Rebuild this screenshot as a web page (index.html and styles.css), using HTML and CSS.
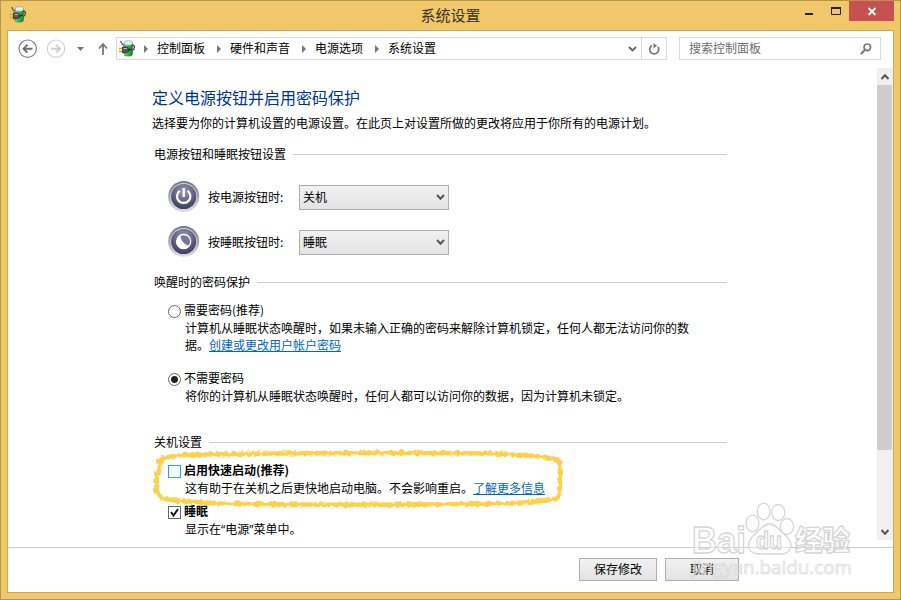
FILE: index.html
```html
<!DOCTYPE html>
<html lang="zh-CN">
<head>
    <meta charset="UTF-8">
    <meta name="viewport" content="width=device-width, initial-scale=1.0">
    <title>系统设置</title>
    <link rel="stylesheet" href="styles.css">
</head>
<body>
    <svg class="defs" width="0" height="0">
        <defs>
            <linearGradient id="cell" x1="0" x2="1" y1="0" y2="0">
                <stop offset="0" stop-color="#8fe08c"/>
                <stop offset="0.35" stop-color="#3fc254"/>
                <stop offset="1" stop-color="#13852b"/>
            </linearGradient>
            <linearGradient id="ring" x1="0" x2="0" y1="0" y2="1">
                <stop offset="0" stop-color="#77777a"/>
                <stop offset="0.5" stop-color="#a3a3a8"/>
                <stop offset="1" stop-color="#e2e2e6"/>
            </linearGradient>
            <radialGradient id="orb" cx="0.5" cy="0.3" r="0.75">
                <stop offset="0" stop-color="#9c9cb8"/>
                <stop offset="0.5" stop-color="#66668a"/>
                <stop offset="1" stop-color="#343458"/>
            </radialGradient>
        </defs>
        <symbol id="power-icon" viewBox="0 0 17 17">
            <path d="M1.500 1l2 3.500 2 1" fill="none" stroke="#555" stroke-width="1.200"/>
            <path d="M13 5c3.500 0 3 4.500-.5 6" fill="none" stroke="#444" stroke-width="1.300"/>
            <rect x="5" y="2" width="8.500" height="14" rx="2.500" fill="url(#cell)" stroke="#2c7038" stroke-width=".6"/>
            <ellipse cx="9.300" cy="3" rx="4.200" ry="2.300" fill="#e9ecf8" stroke="#8790a5" stroke-width=".6"/>
            <path d="M0 8.500h4M0 11.500h4" stroke="#d9a514" stroke-width="1.300"/>
            <path d="M3.500 7h4l2.300 1.500v2.700L7.500 12.700h-4z" fill="#55555a" stroke="#222225" stroke-width=".7"/>
            <path d="M4.500 8.500h3.500" stroke="#bbb" stroke-width="1"/>
            <path d="M9.500 10l3.300-.8" stroke="#222" stroke-width="1.200"/>
        </symbol>
    </svg>

    <div class="window">
        <div class="titlebar">
            <svg class="app-icon" width="17" height="17"><use href="#power-icon"/></svg>
            <div class="window-title">系统设置</div>
            <div class="window-controls">
                <svg class="control" width="30" height="20"><path d="M6 12h8v2H6z" fill="#222"/></svg>
                <svg class="control" width="20" height="20"><path d="M2.500 7v6.500h9V7z" fill="none" stroke="#222"/><path d="M2 6h10v2H2z" fill="#222"/></svg>
                <svg class="close" width="45" height="20"><path d="M19.500 7l7 7M26.500 7l-7 7" stroke="#fff" stroke-width="1.800"/></svg>
            </div>
        </div>

        <div class="client">
            <div class="navbar">
                <div class="nav-buttons">
                    <svg width="20" height="20"><circle cx="9.700" cy="9.700" r="8.700" fill="none" stroke="#808080" stroke-width="1.200"/><path d="M14.500 9.700H6M9.500 5.700l-4 4 4 4" fill="none" stroke="#707070" stroke-width="1.900"/></svg>
                    <svg width="20" height="20"><circle cx="10" cy="9.700" r="8.700" fill="none" stroke="#d2d2d2" stroke-width="1.200"/><path d="M5 9.700h8.500M10 5.700l4 4-4 4" fill="none" stroke="#cecece" stroke-width="1.900"/></svg>
                    <svg width="9" height="20"><path d="M1 8h7L4.500 12z" fill="#777"/></svg>
                    <svg width="10" height="20"><path d="M5 16V5.500M1 9.500l4-4.500 4 4.500" fill="none" stroke="#777" stroke-width="1.800"/></svg>
                </div>
                <div class="address">
                    <svg width="17" height="17"><use href="#power-icon"/></svg>
                    <div class="crumb"><span>控制面板</span></div>
                    <div class="crumb"><span>硬件和声音</span></div>
                    <div class="crumb"><span>电源选项</span></div>
                    <div class="crumb"><span>系统设置</span></div>
                    <svg class="history" width="9" height="8"><path d="M1 2l3.500 3.500L8 2" fill="none" stroke="#666" stroke-width="1.800"/></svg>
                    <div class="refresh">
                        <svg width="12" height="12"><path d="M4 2.500A4.500 4.500 0 1 0 10 4" fill="none" stroke="#777" stroke-width="1.700"/><path d="M5.500 0v5.500L9 2.700z" fill="#777"/></svg>
                    </div>
                </div>
                <div class="search">
                    <span>搜索控制面板</span>
                    <svg width="12" height="12"><circle cx="7.300" cy="4.300" r="3.300" fill="none" stroke="#777" stroke-width="1.700"/><path d="M5 6.800L.8 11" stroke="#777" stroke-width="2"/></svg>
                </div>
            </div>

            <div class="body">
                <div class="content">
                    <h1>定义电源按钮并启用密码保护</h1>
                    <p class="intro">选择要为你的计算机设置的电源设置。在此页上对设置所做的更改将应用于你所有的电源计划。</p>

                    <div class="section-title">电源按钮和睡眠按钮设置</div>
                    <div class="button-row first">
                        <svg width="32" height="32">
                            <circle cx="15.700" cy="15.500" r="15.500" fill="url(#ring)"/>
                            <circle cx="15.700" cy="15.500" r="13.400" fill="#d7d7df"/>
                            <circle cx="15.700" cy="15.500" r="12.600" fill="url(#orb)"/>
                            <path d="M11.800 9.800a6.700 6.700 0 1 0 7.800 0" fill="none" stroke="#fff" stroke-width="2.200"/>
                            <path d="M15.700 7v9" stroke="#fff" stroke-width="2.400"/>
                        </svg>
                        <span class="button-label">按电源按钮时:</span>
                        <div class="select"><span>关机</span><svg width="9" height="8"><path d="M1 2l3.500 3.700L8 2" fill="none" stroke="#555" stroke-width="2"/></svg></div>
                    </div>
                    <div class="button-row">
                        <svg width="32" height="32">
                            <circle cx="15.700" cy="15.500" r="15.500" fill="url(#ring)"/>
                            <circle cx="15.700" cy="15.500" r="13.400" fill="#d7d7df"/>
                            <circle cx="15.700" cy="15.500" r="12.600" fill="url(#orb)"/>
                            <circle cx="15.700" cy="15.500" r="7" fill="#77779a" stroke="#fff" stroke-width="1.300"/>
                            <path d="M12.500 9.200a7.200 7.200 0 1 0 9 10.500C16.500 19 12.500 14.500 12.500 9.200z" fill="#fff"/>
                        </svg>
                        <span class="button-label">按睡眠按钮时:</span>
                        <div class="select"><span>睡眠</span><svg width="9" height="8"><path d="M1 2l3.500 3.700L8 2" fill="none" stroke="#555" stroke-width="2"/></svg></div>
                    </div>

                    <div class="section-title wake">唤醒时的密码保护</div>
                    <div class="option password-on">
                        <span class="radio"></span>需要密码(推荐)
                    </div>
                    <p class="description">计算机从睡眠状态唤醒时，如果未输入正确的密码来解除计算机锁定，任何人都无法访问你的数据。<a href="#">创建或更改用户帐户密码</a></p>
                    <div class="option password-off">
                        <span class="radio checked"></span>不需要密码
                    </div>
                    <p class="description">将你的计算机从睡眠状态唤醒时，任何人都可以访问你的数据，因为计算机未锁定。</p>

                    <div class="section-title shutdown">关机设置</div>
                    <div class="option bold fast-startup">
                        <span class="checkbox hot"></span>启用快速启动(推荐)
                    </div>
                    <p class="description">这有助于在关机之后更快地启动电脑。不会影响重启。<a href="#">了解更多信息</a></p>
                    <div class="option bold sleep">
                        <span class="checkbox"><svg width="11" height="11"><path d="M2 5l2.500 3.500L9 2" fill="none" stroke="#111" stroke-width="1.900"/></svg></span>睡眠
                    </div>
                    <p class="description">显示在<span class="quote">“</span>电源<span class="quote">”</span>菜单中。</p>
                </div>

                <div class="scrollbar">
                    <svg width="16" height="17"><path d="M4.500 11l3.500-3.700 3.500 3.700" fill="none" stroke="#555" stroke-width="2"/></svg>
                    <div class="thumb"></div>
                    <svg class="down" width="16" height="17"><path d="M4.500 7l3.500 3.700L11.500 7" fill="none" stroke="#555" stroke-width="2"/></svg>
                </div>
            </div>

            <div class="footer">
                <button class="save">保存修改</button>
                <button class="cancel">取消</button>
            </div>
        </div>

        <!-- hand-drawn marker around the fast startup option -->
        <svg class="marker" width="420" height="66" viewBox="150 445 420 66">
            <filter id="rough" x="-5%" y="-20%" width="110%" height="140%">
                <feTurbulence type="fractalNoise" baseFrequency="0.25" numOctaves="2" seed="4"/>
                <feDisplacementMap in="SourceGraphic" scale="5" xChannelSelector="R" yChannelSelector="G"/>
            </filter>
            <path filter="url(#rough)" d="M158 461C164 456 180 455 205 454.500C290 453 420 453 490 453.500C520 454 545 456 558 460C562 463 559 474 560 482C561 491 560 496 556 499C540 502 510 503.500 470 504C380 505 270 504.500 220 503.500C190 502 168 501 160 497C155 493 156 484 157 476C158 469 160 464 163 460"/>
        </svg>

        <svg class="watermark" width="170" height="82" viewBox="688 500 170 82">
            <g class="paw">
                <ellipse cx="752.500" cy="523.500" rx="6.500" ry="8.300"/>
                <ellipse cx="763.700" cy="511.500" rx="6.300" ry="8.300"/>
                <ellipse cx="778.300" cy="512.500" rx="6.500" ry="8"/>
                <ellipse cx="787" cy="526.500" rx="6.700" ry="8"/>
                <path d="M769.500 524C776 524 780 531 787 537C794 544 791 554 781 554H759C748 554 746 544 752 537C759 531 763 524 769.500 524z"/>
            </g>
            <text class="brand" x="692" y="553" textLength="54" lengthAdjust="spacingAndGlyphs">Bai</text>
            <text class="du" x="756" y="549" textLength="26" lengthAdjust="spacingAndGlyphs">du</text>
            <text class="brand-cn" x="795" y="551" textLength="55" lengthAdjust="spacingAndGlyphs">经验</text>
            <text class="url" x="692" y="574" textLength="160" lengthAdjust="spacingAndGlyphs">jingyan.baidu.com</text>
        </svg>
    </div>
</body>
</html>
```

FILE: styles.css
```css
* {
    box-sizing: border-box;
}

body {
    margin: 0;
    font-family: 'Noto Sans CJK SC', sans-serif;
    font-size: 12px;
    line-height: 16px;
    color: #000;
    overflow: hidden;
}

svg {
    display: block;
    flex-shrink: 0;
}

.defs {
    position: absolute;
}

.window {
    position: relative;
    display: flex;
    flex-direction: column;
    width: 901px;
    height: 600px;
    padding: 0 6px 6px;
    background-color: #f0c869;
    border: 1px solid #b4964f;
}

/* title bar */
.titlebar {
    display: grid;
    grid-template-columns: 1fr auto 1fr;
    height: 29px;
}

.app-icon {
    margin: 5px 0 0 3px;
}

.window-title {
    font-size: 15px;
    line-height: 28px;
    color: #3a3120;
}

.window-controls {
    display: flex;
    justify-content: flex-end;
}

.close {
    background-color: #c75050;
}

.client {
    flex: 1;
    display: flex;
    flex-direction: column;
    background-color: #fff;
    border: 1px solid #cda956;
}

/* navigation */
.navbar {
    display: flex;
    height: 37px;
    padding: 6px 12px 8px 10px;
}

.nav-buttons {
    display: flex;
    width: 98px;
    padding-top: 2px;
}

.nav-buttons svg:nth-child(2) {
    margin-left: 8px;
}

.nav-buttons svg:nth-child(3) {
    margin-left: 10px;
}

.nav-buttons svg:nth-child(4) {
    margin-left: 13px;
}

.address {
    display: flex;
    align-items: center;
    width: 551px;
    padding-left: 2px;
    border: 1px solid #d9d9d9;
}

.crumb {
    display: flex;
    align-items: center;
    margin-left: 8px;
}

.crumb span,
.search span,
.select span {
    padding-bottom: 2px;
}

.crumb::before {
    content: "";
    width: 0;
    margin-right: 9px;
    border: 4px solid transparent;
    border-left-color: #777;
    border-right: none;
}

.crumb + .crumb {
    margin-left: 12px;
}

.history {
    margin-left: auto;
    margin-right: 4px;
}

.refresh {
    display: flex;
    align-items: center;
    justify-content: center;
    align-self: stretch;
    width: 25px;
    border-left: 1px solid #d9d9d9;
}

.search {
    display: flex;
    align-items: center;
    justify-content: space-between;
    width: 202px;
    margin-left: 12px;
    padding: 0 8px 0 9px;
    color: #6d6d6d;
    border: 1px solid #d9d9d9;
}

/* settings */
.body {
    display: flex;
    justify-content: space-between;
    height: 472px;
}

.content {
    width: 719px;
    padding: 19px 0 0 144px;
}

h1 {
    margin: 0;
    font-size: 16px;
    font-weight: 400;
    line-height: 20px;
    color: #003399;
}

.intro {
    margin: 8px 0 0;
}

.section-title {
    display: flex;
    align-items: center;
    margin: 15px 0 0 2px;
}

.section-title::after {
    content: "";
    flex: 1;
    height: 1px;
    margin: 0 0 -1px 7px;
    background-color: #ccc;
}

.section-title.wake {
    margin-top: 16px;
}

.section-title.shutdown {
    margin-top: 30px;
}

.button-row {
    display: flex;
    align-items: center;
    height: 32px;
    margin: 13px 0 0 16px;
}

.button-row.first {
    margin-top: 19px;
}

.button-label {
    width: 91px;
    margin-left: 8px;
    padding-bottom: 1px;
}

.select {
    display: flex;
    align-items: center;
    justify-content: space-between;
    width: 150px;
    height: 25px;
    padding: 0 3px;
    background: linear-gradient(#f1f1f1, #e3e3e3);
    border: 1px solid #acacac;
}

.select span {
    padding-bottom: 0;
}

.option {
    display: flex;
    align-items: center;
    height: 16px;
    margin-left: 16px;
}

.option.bold {
    font-weight: 700;
}

.password-on {
    margin-top: 12px;
}

.password-off {
    margin-top: 17px;
}

.fast-startup {
    margin-top: 12px;
}

.sleep {
    margin-top: 7px;
}

.radio,
.checkbox {
    width: 13px;
    height: 13px;
    margin: 2px 3px 0 0;
    background-color: #fff;
    border: 1px solid #666;
}

.radio {
    border-radius: 50%;
}

.radio.checked {
    background: radial-gradient(circle, #222 3px, #fff 4px);
}

.checkbox.hot {
    background-color: #f3f9ff;
    border-color: #3399ff;
}

.description {
    width: 510px;
    margin: 1px 0 0 33px;
    line-height: 17px;
}

.quote {
    font-family: 'Open Sans', sans-serif;
    line-height: 1;
}

a {
    color: #0066cc;
}

/* scrollbar */
.scrollbar {
    display: flex;
    flex-direction: column;
    width: 16px;
    background-color: #f0f0f0;
}

.thumb {
    width: 15px;
    height: 365px;
    background-color: #cdcdcd;
}

.scrollbar .down {
    margin-top: auto;
}

/* footer */
.footer {
    flex: 1;
    display: flex;
    justify-content: flex-end;
    align-items: flex-start;
    gap: 8px;
    margin-top: 7px;
    padding: 10px 154px 0 0;
    border-top: 1px solid #ccc;
}

button {
    height: 23px;
    padding: 0 0 2px;
    font: inherit;
    color: #000;
    background: linear-gradient(#f1f1f1, #e3e3e3);
    border: 1px solid #acacac;
}

.save {
    width: 78px;
}

.cancel {
    width: 74px;
}

.marker {
    position: absolute;
    left: 149px;
    top: 444px;
}

.marker path {
    fill: none;
    stroke: #ffd04a;
    stroke-width: 4.5;
    stroke-linecap: round;
}

/* site watermark */
.watermark {
    position: absolute;
    left: 687px;
    top: 499px;
    fill: #fff;
    fill-opacity: 0.4;
    stroke: #d6d6d6;
    stroke-width: 1.3;
}

.watermark .brand {
    font: 700 36px 'Liberation Sans', sans-serif;
}

.watermark .du {
    font: 700 23px 'Liberation Sans', sans-serif;
}

.watermark .brand-cn {
    font: 900 28px 'Noto Sans CJK SC', sans-serif;
}

.watermark .url {
    font: 400 19px 'Open Sans', sans-serif;
    fill-opacity: 0.6;
    stroke: #ccc;
    stroke-opacity: 0.5;
    stroke-width: 1.2;
}
```
